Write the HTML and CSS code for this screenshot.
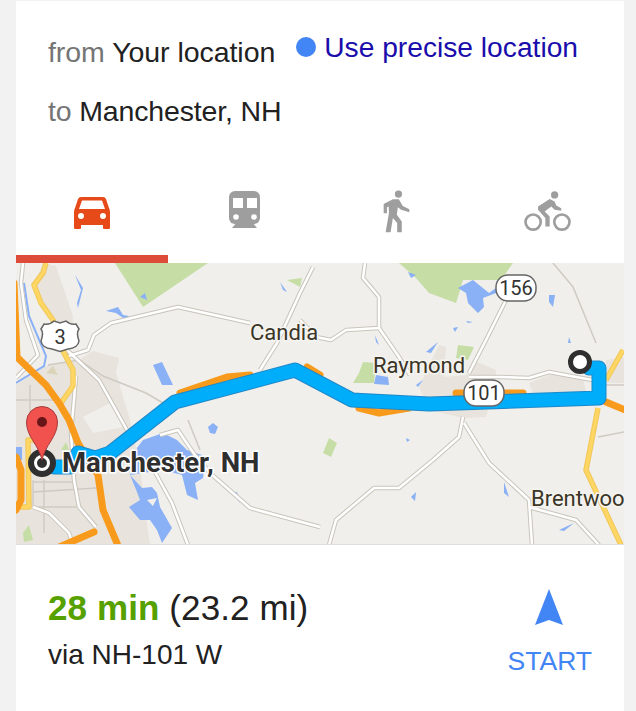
FILE: index.html
```html
<!DOCTYPE html>
<html lang="en">
<head>
    <meta charset="UTF-8">
    <meta name="viewport" content="width=device-width, initial-scale=1.0">
    <title>Directions to Manchester, NH</title>
    <link rel="stylesheet" href="styles.css">
</head>
<body>
    <div class="card">
        <div class="places">
            <div class="place-row">
                <div class="place"><span class="muted">from</span> Your location</div>
                <a class="precise" href="#"><span class="precise-dot"></span>Use precise location</a>
            </div>
            <div class="place place-to"><span class="muted">to</span> Manchester, NH</div>
        </div>

        <div class="tabs">
            <div class="tab tab-active">
                <svg class="icon-car" viewBox="0 0 36 33">
                    <path fill="#e64a19" fill-rule="evenodd" d="M7 0H29Q31 0 32 2L35 11Q36 13 36 15V31Q36 32 35 32H30Q29 32 29 31V28H7V31Q7 32 6 32H1Q0 32 0 31V15Q0 13 1 11L4 2Q5 0 7 0ZM8 3.500H28L31 12H5Z"/>
                    <circle cx="7" cy="19" r="3" fill="#fff"/>
                    <circle cx="29" cy="19" r="3" fill="#fff"/>
                </svg>
            </div>
            <div class="tab">
                <svg class="icon-train" viewBox="0 0 31 37">
                    <rect width="31" height="33" rx="6" fill="#9e9e9e"/>
                    <path fill="#9e9e9e" d="M3 37L8 31H23L28 37Z"/>
                    <rect x="4" y="7" width="10" height="10" fill="#fff"/>
                    <rect x="18" y="7" width="10" height="10" fill="#fff"/>
                    <circle cx="7" cy="26" r="2.800" fill="#fff"/>
                    <circle cx="25" cy="26" r="2.800" fill="#fff"/>
                </svg>
            </div>
            <div class="tab">
                <svg class="icon-walk" viewBox="40 30 85 130">
                    <circle cx="87" cy="42" r="11" fill="#9e9e9e"/>
                    <path fill="#9e9e9e" d="M42 72L70 58H88L100 78L120 88V97L95 90L85 82L82 105L97 125V158H83V130L70 115L63 158H48L58 100L57 80L52 82V100H42Z"/>
                </svg>
            </div>
            <div class="tab">
                <svg class="icon-bike" viewBox="460 25 150 130">
                    <circle cx="555" cy="40" r="11" fill="#9e9e9e"/>
                    <circle cx="490" cy="122" r="23" fill="none" stroke="#9e9e9e" stroke-width="8"/>
                    <circle cx="577" cy="122" r="23" fill="none" stroke="#9e9e9e" stroke-width="8"/>
                    <path fill="#9e9e9e" d="M505 75L540 52L555 60L560 72L575 80V88L555 85L545 75L525 90L540 105V135H527V110L505 85Z"/>
                </svg>
            </div>
        </div>

        <svg class="map" viewBox="16 263 608 282">
            <rect x="16" y="263" width="608" height="282" fill="#f0efeb"/>

            <!-- built up areas -->
            <g fill="#e8e4dd">
                <path d="M43 263L56 266L73 316L70 353L53 318L34 285Z"/>
                <path d="M16 385L48 365L79 360L93 351L119 358L116 373L130 420L140 467L147 523L150 545H16Z"/>
                <path d="M419 387L439 345L446 347L444 377L466 375L473 360L496 370L496 377L486 417L463 418L429 410Z"/>
                <path d="M529 383L549 375L583 377L586 392L533 393Z"/>
                <path d="M606 360L624 357V383H606Z"/>
            </g>
            <path fill="#f0efeb" d="M83 417L110 403L123 427L93 433Z"/>
            <path fill="#dcd3bb" d="M46 373L53 366L58 375Z"/>

            <!-- parks -->
            <g fill="#c6dea6">
                <path d="M115 263H208L143 307Z"/>
                <path d="M399 263H513L501 280H463L456 303L429 293L416 278Z"/>
                <path d="M363 362L376 363L374 383L353 383L359 373Z"/>
                <path d="M458 345L474 347L468 360L456 358Z"/>
                <path d="M329 438L337 443L331 457L323 453Z"/>
                <path d="M287 280L302 278L300 287Z"/>
                <path d="M23 533L29 525L33 540L24 542Z"/>
                <path d="M61 450L66 442L69 450Z"/>
            </g>

            <!-- water -->
            <g fill="#8ab0f5">
                <path d="M153 365L162 362L173 385L162 385Z"/>
                <path d="M137 448L143 440L163 433L177 440L187 450L202 455L205 463L203 478L195 483L198 500L187 495L182 475L163 470L130 475Z"/>
                <path fill-rule="evenodd" d="M130 475L142 488L152 487L157 493L160 507L172 528L162 543L157 530L150 520L140 520L129 507L140 500L137 492ZM147 500L157 498L153 506Z"/>
                <path d="M208 427L213 423L218 427L215 434L210 433Z"/>
                <path d="M106 311L118 307L123 315L129 316L126 320L116 313Z"/>
                <path d="M75 275L83 288L78 308L77 303L81 290Z"/>
                <path d="M280 282L287 292L283 290Z"/>
                <path d="M140 297L145 293L147 300Z"/>
                <path d="M233 493L237 492L240 503Z"/>
                <path d="M458 288L473 280L489 293L503 283L496 293L483 298L484 307L478 313L468 303L466 293Z"/>
                <path d="M549 295L555 295L553 307L549 302Z"/>
                <path d="M408 272L416 275L411 278Z"/>
                <path d="M426 352L438 342L431 353Z"/>
                <path d="M376 375L388 377L389 385L374 384Z"/>
                <path d="M416 385L423 380L418 387Z"/>
                <path d="M504 482L509 497L504 493Z"/>
                <path d="M411 497L416 492L415 501Z"/>
                <path d="M453 328L458 327L455 332Z"/>
                <path d="M466 321L473 322L468 323Z"/>
                <path d="M375 335L379 345L376 342Z"/>
                <path d="M568 343L571 343L569 337Z"/>
                <path d="M559 530L574 523L564 531Z"/>
                <path d="M406 438L410 440L407 442Z"/>
                <path d="M16 447H22V460H16Z"/>
            </g>
            <path fill="none" stroke="#8ab0f5" stroke-width="2" d="M24 283L29 316L46 356L44 366L16 383"/>

            <!-- city streets -->
            <g fill="none" stroke="#cfcbc3" stroke-width="1.500">
                <path d="M33 482H76M33 492L96 488M33 507H79M33 480V507M44 480V533M48 365L79 360L103 376L146 393L175 410"/>
                <path d="M16 400H60M30 385V440M188 420L200 450"/>
                <path d="M553 263L573 287L596 343M598 437L624 432M606 385H624"/>
            </g>

            <!-- minor roads -->
            <g fill="none" stroke="#c9c5bc" stroke-width="4.500" stroke-linejoin="round">
                <path id="road-a" d="M69 356L88 350L94 335L111 323L178 307L250 323"/>
                <path id="road-b" d="M260 370L277 343L300 293L313 267"/>
                <path id="road-c" d="M23 263L21 283L26 320L38 355L16 378"/>
                <path id="road-d" d="M68 351L99 380L127 430"/>
                <path id="road-e" d="M76 376L74 400L71 433L74 480L79 507L96 527"/>
                <path id="road-f" d="M160 435L178 430L188 445L195 455L210 473L250 508L320 527"/>
                <path id="road-g" d="M155 472L172 503L188 545"/>
                <path id="road-h" d="M365 263L363 278L379 297L379 328L346 330L331 340L316 337L300 320"/>
                <path id="road-i" d="M379 328L399 357L410 375"/>
                <path id="road-j" d="M469 373L486 340L506 300"/>
                <path id="road-k" d="M469 377L499 377L529 378L549 372L576 377L593 380"/>
                <path id="road-l" d="M463 417L459 437L433 460L399 488L374 488L336 520L329 545"/>
                <path id="road-m" d="M464 423L489 463L529 500L532 545"/>
                <path id="road-n" d="M529 507L576 520L599 545"/>
                <path id="road-o" d="M33 507L49 513L69 533L73 545"/>
            </g>
            <g fill="none" stroke="#fff" stroke-width="2.500" stroke-linejoin="round">
                <use href="#road-a"/>
                <use href="#road-b"/>
                <use href="#road-c"/>
                <use href="#road-d"/>
                <use href="#road-e"/>
                <use href="#road-f"/>
                <use href="#road-g"/>
                <use href="#road-h"/>
                <use href="#road-i"/>
                <use href="#road-j"/>
                <use href="#road-k"/>
                <use href="#road-l"/>
                <use href="#road-m"/>
                <use href="#road-n"/>
                <use href="#road-o"/>
            </g>

            <!-- yellow roads -->
            <g fill="none" stroke="#f1c75a" stroke-width="5.500" stroke-linejoin="round">
                <path id="yellow-a" d="M46 263L43 273L34 285L41 303L53 320L64 353L73 370L73 386L61 403"/>
                <path id="yellow-b" d="M36 440H28L29 507H16"/>
                <path id="yellow-c" d="M623 350L606 380"/>
                <path id="yellow-d" d="M598 408L586 470L621 545"/>
            </g>
            <g fill="none" stroke="#fdd663" stroke-width="3.500" stroke-linejoin="round">
                <use href="#yellow-a"/>
                <use href="#yellow-b"/>
                <use href="#yellow-c"/>
                <use href="#yellow-d"/>
            </g>

            <!-- highways -->
            <g fill="none" stroke="#f89b1c" stroke-width="7" stroke-linejoin="round" stroke-linecap="round">
                <path d="M14 283L17 357L21 361L46 385L59 403L69 420L78 443L98 475L103 510L119 548"/>
                <path d="M57 548L94 532"/>
                <path d="M16 457L21 470V500L16 510"/>
                <path d="M180 393L227 377L250 375"/>
                <path d="M307 367L320 375"/>
                <path d="M359 408L379 413L409 408"/>
                <path d="M456 393L523 393"/>
                <path d="M606 402L630 412"/>
            </g>

            <!-- route -->
            <path fill="none" stroke="#1e88c9" stroke-width="15" stroke-linejoin="round" stroke-linecap="round" d="M54 467H70L78 453L95 458L110 453L175 402L295 370L352 400L429 404L599 398V368H589"/>
            <path fill="none" stroke="#00adfb" stroke-width="13" stroke-linejoin="round" stroke-linecap="round" d="M54 467H70L78 453L95 458L110 453L175 402L295 370L352 400L429 404L599 398V368H589"/>

            <!-- shields -->
            <path fill="#fff" stroke="#666" stroke-width="1.500" d="M44 324Q50 325 54 321L60 323L66 321Q70 325 76 324L79 329Q76 333 79 341Q78 348 68 349L60 351.500L52 349Q42 348 41 341Q44 333 41 329Z"/>
            <rect x="496" y="275" width="40" height="26" rx="12" fill="#fff" stroke="#666" stroke-width="1.500"/>
            <rect x="464" y="380" width="40" height="26" rx="12" fill="#fff" stroke="#666" stroke-width="1.500"/>
            <text class="shield-text" x="60" y="344">3</text>
            <text class="shield-text" x="516" y="295">156</text>
            <text class="shield-text" x="484" y="400">101</text>

            <!-- labels -->
            <text class="map-label" x="250" y="340">Candia</text>
            <text class="map-label" x="373" y="373">Raymond</text>
            <text class="map-label" x="531" y="506">Brentwoo</text>
            <text class="map-label-strong" x="62" y="472">Manchester, NH</text>

            <!-- markers -->
            <circle cx="580" cy="362" r="9.500" fill="#fff" stroke="#2f2f2f" stroke-width="5"/>
            <circle cx="42" cy="463" r="11" fill="#fff" stroke="#2f2f2f" stroke-width="6"/>
            <circle cx="42" cy="463" r="5" fill="#2f2f2f"/>
            <path fill="#f1524e" stroke="#a8383a" d="M42 460C39 445 26.500 437 26.500 422A15.500 15.500 0 0 1 57.500 422C57.500 437 45 445 42 460Z"/>
            <circle cx="42" cy="422" r="5" fill="#671518"/>

            <rect x="16" y="544" width="608" height="1" fill="#dedede"/>
        </svg>

        <div class="summary">
            <div class="summary-text">
                <div class="trip"><span class="duration">28 min</span> (23.2 mi)</div>
                <div class="via">via NH-101 W</div>
            </div>
            <a class="start" href="#">
                <svg class="icon-nav" viewBox="0 0 28 37">
                    <path fill="#4285f4" d="M14 0L28 36L14 31L0 36Z"/>
                </svg>
                START
            </a>
        </div>
    </div>
</body>
</html>
```

FILE: styles.css
```css
html, body {
    height: 100%;
}
body {
    margin: 0;
    background-color: #f2f2f2;
    font-family: "Liberation Sans", Arial, sans-serif;
    color: #212121;
    overflow: hidden;
}
a {
    text-decoration: none;
}
.card {
    width: 608px;
    height: 710px;
    margin: 1px 0 0 16px;
    background-color: #fff;
}
.places {
    height: 176px;
    padding: 33px 32px 0;
    box-sizing: border-box;
}
.place-row {
    display: flex;
    justify-content: space-between;
    align-items: flex-start;
}
.place {
    font-size: 28.5px;
    line-height: 36px;
    letter-spacing: -0.05px;
}
.place-to {
    margin-top: 23px;
    letter-spacing: -0.15px;
}
.muted {
    color: #757575;
}
.precise {
    display: flex;
    align-items: center;
    margin: -5px 14px 0 0;
    font-size: 28.2px;
    line-height: 36px;
    color: #1a0dab;
}
.precise-dot {
    width: 20px;
    height: 20px;
    margin-right: 8px;
    border-radius: 50%;
    background-color: #4285f4;
}
.tabs {
    display: flex;
    height: 86px;
}
.tab {
    flex: 1;
    display: flex;
    justify-content: center;
    padding-top: 13px;
    box-sizing: border-box;
}
.tab-active {
    border-bottom: 8px solid #dd4b39;
}
.icon-car {
    width: 36px;
    height: 33px;
    margin-top: 7px;
}
.icon-train {
    width: 31px;
    height: 37px;
    margin-top: 1px;
}
.icon-walk {
    width: 28px;
    height: 43px;
    margin-left: 2px;
}
.icon-bike {
    width: 50px;
    height: 43px;
}
.map {
    display: block;
    width: 608px;
    height: 282px;
}
.map-label {
    font-family: Roboto, sans-serif;
    font-size: 22px;
    fill: #3b3527;
    stroke: #f5f4f0;
    stroke-width: 3px;
    paint-order: stroke;
}
.map-label-strong {
    font-family: Roboto, sans-serif;
    font-size: 27.5px;
    font-weight: 700;
    fill: #2f2f2f;
    stroke: #fff;
    stroke-width: 3px;
    paint-order: stroke;
}
.shield-text {
    font-family: Roboto, sans-serif;
    font-size: 20px;
    fill: #333;
    text-anchor: middle;
}
.summary {
    display: flex;
    justify-content: space-between;
    padding: 43px 32px 0;
}
.trip {
    font-size: 35px;
    line-height: 40px;
    letter-spacing: 0.1px;
}
.duration {
    font-weight: bold;
    color: #56a000;
}
.via {
    margin-top: 11px;
    font-size: 28px;
    line-height: 32px;
}
.start {
    display: flex;
    flex-direction: column;
    align-items: center;
    font-size: 26.5px;
    line-height: 32px;
    color: #4285f4;
}
.icon-nav {
    width: 28px;
    height: 37px;
    margin: 1px 2px 19px 0;
}
```
